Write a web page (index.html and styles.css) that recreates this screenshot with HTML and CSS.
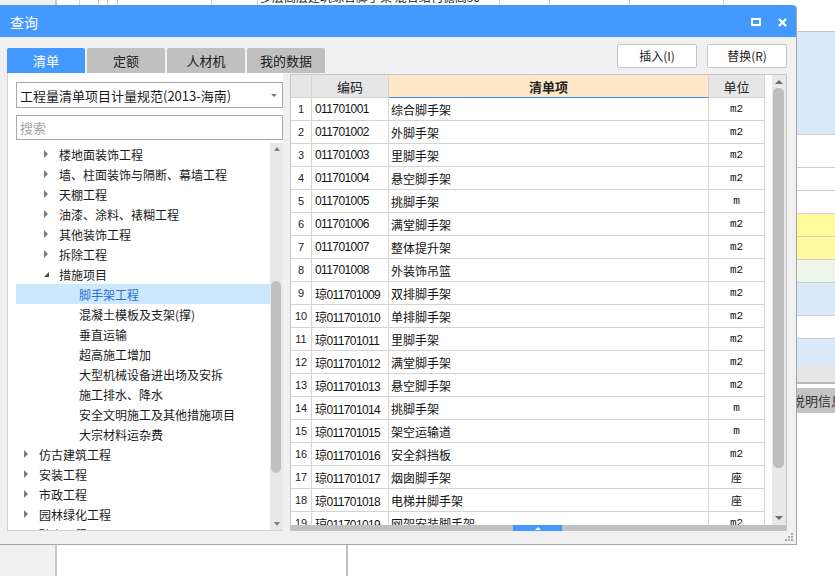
FILE: index.html
```html
<!DOCTYPE html>
<html lang="zh-CN">
<head>
<meta charset="utf-8">
<title>查询</title>
<link rel="stylesheet" href="styles.css">
</head>
<body>
<div class="bg">
  <div class="bg-top">
    <div class="c c1"></div>
    <div class="c c2"></div>
    <div class="c c3 or"></div>
    <div class="c c4 or"></div>
    <div class="c c5"></div>
    <div class="c c6"></div>
    <div class="c c7"></div>
    <div class="c c8"><span class="cut-text">多层高层建筑综合脚手架 混合结构檐高30</span></div>
    <div class="c c9"></div>
    <div class="c c10"></div>
    <div class="c c11"></div>
    <div class="c c12"></div>
  </div>
  <div class="bg-row blue h103"></div>
  <div class="bg-row white h33"></div>
  <div class="bg-row white h23"></div>
  <div class="bg-row white h23"></div>
  <div class="bg-row yellow h23"></div>
  <div class="bg-row yellow h23"></div>
  <div class="bg-row green h23"></div>
  <div class="bg-row blue h33"></div>
  <div class="bg-row white h23"></div>
  <div class="bg-row blue h26 nob"></div>
  <div class="bg-row grey h19"></div>
  <div class="bg-gap"></div>
  <div class="bg-band">说明信息</div>
  <div class="bg-bottom">
    <div class="bl"></div>
    <div class="bm"></div>
    <div class="br"></div>
  </div>
</div>

<div class="dialog">
  <div class="titlebar">
    <span class="title">查询</span>
    <div class="win-btns">
      <svg class="ic-max" width="10" height="8" viewBox="0 0 10 8"><rect x="1" y="1" width="8" height="6" fill="none" stroke="#fff" stroke-width="2"/></svg>
      <svg class="ic-close" width="9" height="9" viewBox="0 0 9 9"><path d="M1 1 L8 8 M8 1 L1 8" stroke="#fff" stroke-width="2.2" fill="none"/></svg>
    </div>
  </div>
  <div class="dlg-body">
    <div class="dlg-head">
      <div class="tabs">
        <div class="tab active">清单</div>
        <div class="tab">定额</div>
        <div class="tab">人材机</div>
        <div class="tab">我的数据</div>
      </div>
      <div class="actions">
        <div class="btn">插入(I)</div>
        <div class="btn">替换(R)</div>
      </div>
    </div>
    <div class="dlg-main">
      <div class="left-panel">
        <div class="select"><span>工程量清单项目计量规范(2013-海南)</span><i class="caret"></i></div>
        <div class="search">搜索</div>
        <div class="tree">
          <div class="tree-list">
            <div class="node l2"><i class="tw closed"></i>楼地面装饰工程</div>
            <div class="node l2"><i class="tw closed"></i>墙、柱面装饰与隔断、幕墙工程</div>
            <div class="node l2"><i class="tw closed"></i>天棚工程</div>
            <div class="node l2"><i class="tw closed"></i>油漆、涂料、裱糊工程</div>
            <div class="node l2"><i class="tw closed"></i>其他装饰工程</div>
            <div class="node l2"><i class="tw closed"></i>拆除工程</div>
            <div class="node l2"><i class="tw open"></i>措施项目</div>
            <div class="node l3 sel">脚手架工程</div>
            <div class="node l3">混凝土模板及支架(撑)</div>
            <div class="node l3">垂直运输</div>
            <div class="node l3">超高施工增加</div>
            <div class="node l3">大型机械设备进出场及安拆</div>
            <div class="node l3">施工排水、降水</div>
            <div class="node l3">安全文明施工及其他措施项目</div>
            <div class="node l3">大宗材料运杂费</div>
            <div class="node l1"><i class="tw closed"></i>仿古建筑工程</div>
            <div class="node l1"><i class="tw closed"></i>安装工程</div>
            <div class="node l1"><i class="tw closed"></i>市政工程</div>
            <div class="node l1"><i class="tw closed"></i>园林绿化工程</div>
            <div class="node l1"><i class="tw closed"></i>矿山工程</div>
          </div>
          <div class="tsb">
            <div class="sb-up"><i class="tri-up"></i></div>
            <div class="tsb-thumb"></div>
            <div class="sb-fill"></div>
            <div class="sb-down"><i class="tri-down"></i></div>
          </div>
        </div>
      </div>
      <div class="grid-panel">
        <div class="grid-body">
          <div class="grid">
            <div class="row head">
              <div class="hc"></div>
              <div class="hc">编码</div>
              <div class="hc hname">清单项</div>
              <div class="hc">单位</div>
            </div>
            <div class="row"><div class="no">1</div><div class="code">011701001</div><div class="name">综合脚手架</div><div class="unit">m2</div></div>
            <div class="row"><div class="no">2</div><div class="code">011701002</div><div class="name">外脚手架</div><div class="unit">m2</div></div>
            <div class="row"><div class="no">3</div><div class="code">011701003</div><div class="name">里脚手架</div><div class="unit">m2</div></div>
            <div class="row"><div class="no">4</div><div class="code">011701004</div><div class="name">悬空脚手架</div><div class="unit">m2</div></div>
            <div class="row"><div class="no">5</div><div class="code">011701005</div><div class="name">挑脚手架</div><div class="unit">m</div></div>
            <div class="row"><div class="no">6</div><div class="code">011701006</div><div class="name">满堂脚手架</div><div class="unit">m2</div></div>
            <div class="row"><div class="no">7</div><div class="code">011701007</div><div class="name">整体提升架</div><div class="unit">m2</div></div>
            <div class="row"><div class="no">8</div><div class="code">011701008</div><div class="name">外装饰吊篮</div><div class="unit">m2</div></div>
            <div class="row"><div class="no">9</div><div class="code">琼011701009</div><div class="name">双排脚手架</div><div class="unit">m2</div></div>
            <div class="row"><div class="no">10</div><div class="code">琼011701010</div><div class="name">单排脚手架</div><div class="unit">m2</div></div>
            <div class="row"><div class="no">11</div><div class="code">琼011701011</div><div class="name">里脚手架</div><div class="unit">m2</div></div>
            <div class="row"><div class="no">12</div><div class="code">琼011701012</div><div class="name">满堂脚手架</div><div class="unit">m2</div></div>
            <div class="row"><div class="no">13</div><div class="code">琼011701013</div><div class="name">悬空脚手架</div><div class="unit">m2</div></div>
            <div class="row"><div class="no">14</div><div class="code">琼011701014</div><div class="name">挑脚手架</div><div class="unit">m</div></div>
            <div class="row"><div class="no">15</div><div class="code">琼011701015</div><div class="name">架空运输道</div><div class="unit">m</div></div>
            <div class="row"><div class="no">16</div><div class="code">琼011701016</div><div class="name">安全斜挡板</div><div class="unit">m2</div></div>
            <div class="row"><div class="no">17</div><div class="code">琼011701017</div><div class="name">烟囱脚手架</div><div class="unit">座</div></div>
            <div class="row"><div class="no">18</div><div class="code">琼011701018</div><div class="name">电梯井脚手架</div><div class="unit">座</div></div>
            <div class="row"><div class="no">19</div><div class="code">琼011701019</div><div class="name">网架安装脚手架</div><div class="unit">m2</div></div>
          </div>
          <div class="grid-gap"></div>
          <div class="vsb">
            <div class="vsb-up"><i class="tri-up dk"></i></div>
            <div class="vsb-thumb"></div>
            <div class="sb-fill"></div>
            <div class="vsb-down"><i class="tri-down dk"></i></div>
          </div>
        </div>
        <div class="hscroll"><div class="hs-tab"><i class="tri-up wh"></i></div></div>
      </div>
    </div>
    <div class="dlg-foot">
      <svg class="grip" width="8" height="8" viewBox="0 0 8 8" fill="#a8a8a8">
        <rect x="6" y="0" width="2" height="2"/>
        <rect x="3" y="3" width="2" height="2"/><rect x="6" y="3" width="2" height="2"/>
        <rect x="0" y="6" width="2" height="2"/><rect x="3" y="6" width="2" height="2"/><rect x="6" y="6" width="2" height="2"/>
      </svg>
    </div>
  </div>
</div>
</body>
</html>
```

FILE: styles.css
```css
* { box-sizing: border-box; }
html, body { margin: 0; padding: 0; }
body {
  width: 835px;
  height: 576px;
  overflow: hidden;
  position: relative;
  background: #fff;
  color: #1a1a1a;
  font-family: "Noto Sans CJK SC", "Liberation Sans", sans-serif;
  font-size: 12px;
}

/* ---------- background application ---------- */
.bg { display: flex; flex-direction: column; height: 576px; }
.bg-top { display: flex; height: 32px; flex: none; border-bottom: 1px solid #c8c8c8; }
.bg-top .c { flex: none; border-right: 1px solid #d0d0d0; overflow: hidden; }
.bg-top .c1 { width: 57px; background: #f0f0f0; border-right: 2px solid #c8c8c8; }
.bg-top .c2 { width: 23px; }
.bg-top .c3 { width: 19px; }
.bg-top .c4 { width: 9px; }
.bg-top .or { border-right-color: #f3c596; }
.bg-top .c5 { width: 10px; }
.bg-top .c6 { width: 94px; }
.bg-top .c7 { width: 46px; }
.bg-top .c8 { width: 242px; padding-left: 2px; }
.bg-top .c9 { width: 50px; }
.bg-top .c10 { width: 80px; }
.bg-top .c11 { width: 94px; }
.bg-top .c12 { flex: 1; border-right: none; }
.cut-text { display: block; margin-top: -11px; line-height: 16px; white-space: nowrap; color: #222; }

.bg-row { flex: none; border-bottom: 1px solid #cfcfcf; }
.bg-row.nob { border-bottom: none; }
.bg-row.blue { background: #dce9fb; }
.bg-row.white { background: #fff; }
.bg-row.yellow { background: #fffa9c; }
.bg-row.green { background: #eef6e9; }
.bg-row.grey { background: #e6e6e6; border-bottom: 2px solid #b8b8b8; }
.h103 { height: 103px; }
.h33 { height: 33px; }
.h23 { height: 23px; }
.h26 { height: 26px; }
.h19 { height: 19px; }
.bg-gap { height: 4px; flex: none; }
.bg-band {
  height: 25px; flex: none; background: #c4c4c4;
  padding-left: 792px; line-height: 25px; font-size: 13px; color: #333; white-space: nowrap; overflow: hidden;
}
.bg-bottom { flex: 1; display: flex; }
.bg-bottom .bl { width: 57px; background: #f0f0f0; border-right: 2px solid #c8c8c8; }
.bg-bottom .bm { width: 291px; border-right: 2px solid #c0c0c0; }
.bg-bottom .br { flex: 1; }

/* ---------- dialog window ---------- */
.dialog {
  position: absolute;
  left: 0;
  top: 5px;
  width: 797px;
  height: 540px;
  background: #f0f0f0;
  border-right: 1px solid #a6a6a6;
  border-bottom: 1px solid #a6a6a6;
  border-top-right-radius: 4px;
  display: flex;
  flex-direction: column;
}
.titlebar {
  height: 32px;
  flex: none;
  background: #4499ff;
  border-top-right-radius: 4px;
  display: flex;
  align-items: center;
  padding: 2px 9px 0 10px;
  color: #fff;
}
.title { font-size: 14px; line-height: 18px; }
.win-btns { margin-left: auto; display: flex; align-items: center; gap: 17px; }
.ic-max, .ic-close { display: block; }

.dlg-body { flex: 1; display: flex; flex-direction: column; padding: 0 9px 0 7px; min-height: 0; }
.dlg-head { height: 36px; flex: none; display: flex; justify-content: space-between; }
.tabs { display: flex; gap: 2px; align-self: flex-end; }
.tab {
  width: 78px; height: 25px; background: #c0c0c0; color: #222;
  border-radius: 2px 2px 0 0; text-align: center; line-height: 25px; font-size: 13px;
}
.tab.active { background: #4499ff; color: #fff; }
.actions { display: flex; gap: 10px; margin-top: 7px; align-self: flex-start; }
.btn {
  width: 80px; height: 24px; background: #fff; border: 1px solid #c4c4c4; border-radius: 2px;
  text-align: center; line-height: 22px; font-size: 12px; color: #222;
}

.dlg-main { height: 458px; flex: none; display: flex; gap: 7px; }

/* left panel */
.left-panel {
  width: 276px; flex: none; background: #fff;
  border-left: 1px solid #d4d4d4; border-bottom: 1px solid #d4d4d4;
  padding: 9px 0 0 8px;
  display: flex; flex-direction: column; min-height: 0;
}
.select {
  height: 26px; flex: none; border: 1px solid #a8a8a8; display: flex; align-items: center;
  padding-left: 3px; font-size: 13px; color: #1a1a1a; white-space: nowrap;
}
.caret {
  margin-left: auto; margin-right: 5px; width: 0; height: 0;
  border-left: 3px solid transparent; border-right: 3px solid transparent; border-top: 3px solid #777;
}
.search {
  margin-top: 7px; height: 25px; flex: none; border: 1px solid #a8a8a8;
  display: flex; align-items: center; padding-left: 3px; font-size: 13px; color: #a3a3a3;
}
.tree { margin-top: 3px; flex: 1; display: flex; min-height: 0; }
.tree-list { flex: 1; overflow: hidden; padding-top: 1px; }
.node { height: 20px; display: flex; align-items: center; white-space: nowrap; font-size: 12px; color: #1a1a1a; }
.node.l1 { padding-left: 8px; }
.node.l2 { padding-left: 28px; }
.node.l3 { padding-left: 63px; }
.node.sel { background: #cce8ff; color: #2a6fd2; }
.tw { flex: none; width: 15px; display: flex; align-items: center; }
.tw.closed::before {
  content: ""; width: 0; height: 0;
  border-left: 4px solid #7c7c7c; border-top: 4px solid transparent; border-bottom: 4px solid transparent;
}
.tw.open::before {
  content: ""; width: 0; height: 0; margin-top: 1px;
  border-bottom: 5px solid #4a4a4a; border-left: 5px solid transparent;
}

.tsb { width: 13px; flex: none; background: #e8e8e8; display: flex; flex-direction: column; }
.sb-up, .sb-down { height: 12px; flex: none; display: flex; align-items: center; justify-content: center; }
.tsb-thumb { margin: 126px 0 0 1px; width: 10px; height: 192px; flex: none; background: #c0c0c0; border-radius: 5px; }
.sb-fill { flex: 1; }
.tri-up { width: 0; height: 0; border-left: 3.5px solid transparent; border-right: 3.5px solid transparent; border-bottom: 4px solid #808080; }
.tri-down { width: 0; height: 0; border-left: 3.5px solid transparent; border-right: 3.5px solid transparent; border-top: 4px solid #808080; }
.tri-up.dk, .tri-down.dk { border-left-width: 4px; border-right-width: 4px; border-bottom-color: #6c6c6c; border-top-color: #6c6c6c; }
.tri-up.wh { border-left-width: 3px; border-right-width: 3px; border-bottom: 3px solid #fff; }

/* right grid */
.grid-panel {
  width: 497px; flex: none; margin-top: 1px; background: #fff;
  border: 1px solid #c8c8c8; border-bottom: none;
  display: flex; flex-direction: column; min-height: 0;
}
.grid-body { flex: 1; display: flex; min-height: 0; }
.grid { width: 474px; flex: none; overflow: hidden; }
.grid-gap { width: 7px; flex: none; }
.row { display: grid; grid-template-columns: 21px 77px 320px 56px; height: 23px; }
.row > div {
  border-right: 1px solid #d4d4d4; border-bottom: 1px solid #d4d4d4;
  display: flex; align-items: center; white-space: nowrap; overflow: hidden;
}
.row.head > div { background: #e6e6e6; justify-content: center; font-size: 13px; color: #222; }
.row.head > .hname { background: #ffe7c9; font-weight: bold; border-bottom-color: #3d8ee8; }
.no { justify-content: center; font-family: "Liberation Sans", sans-serif; font-size: 11px; color: #222; }
.code {
  padding-left: 3px; font-family: "Liberation Sans", "Noto Sans CJK SC", sans-serif;
  font-size: 12px; letter-spacing: -0.6px; color: #111;
}
.name { padding-left: 2px; font-size: 12px; color: #111; }
.unit { justify-content: center; font-family: "Liberation Mono", "Noto Sans CJK SC", monospace; font-size: 11px; color: #111; }

.vsb { width: 14px; flex: none; background: #e8e8e8; display: flex; flex-direction: column; }
.vsb-up { height: 13px; flex: none; display: flex; align-items: center; justify-content: center; padding-top: 1px; }
.vsb-thumb { margin: 0 0 0 1px; width: 11px; height: 380px; flex: none; background: #bdbdbd; border-radius: 5px; }
.vsb-down { height: 14px; flex: none; display: flex; align-items: center; justify-content: center; }

.hscroll { height: 6px; flex: none; background: #c0c0c0; display: flex; }
.hs-tab { margin-left: 222px; width: 49px; background: #4499ff; display: flex; align-items: center; justify-content: center; }

.dlg-foot { flex: 1; display: flex; justify-content: flex-end; align-items: flex-end; padding-bottom: 3px; }
.grip { display: block; margin-right: -6px; }
```
